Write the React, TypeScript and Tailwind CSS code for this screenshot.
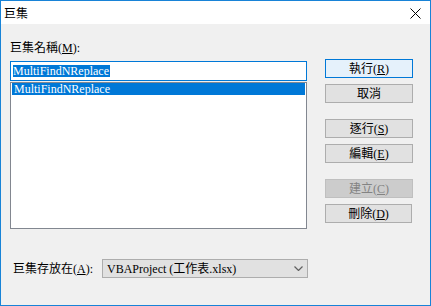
import React from "react";

const F = "font-['Liberation_Serif','Noto_Sans_CJK_TC',serif]";

function U({ c }: { c: string }) {
  return <span className="underline underline-offset-[1px] decoration-1">{c}</span>;
}

function Btn({
  children,
  kind = "normal",
  w = "w-[88px]",
  mt,
}: {
  children: React.ReactNode;
  kind?: "default" | "normal" | "disabled";
  w?: string;
  mt: string;
}) {
  const cls =
    kind === "default"
      ? "bg-[#e5f1fb] border-[#0078d7] text-black"
      : kind === "disabled"
      ? "bg-[#cccccc] border-[#bfbfbf] text-[#838383]"
      : "bg-[#e1e1e1] border-[#adadad] text-black";
  return (
    <div
      className={`${w} ${mt} h-[19px] border flex items-center justify-center text-[12px] leading-[14px] ${cls}`}
    >
      {children}
    </div>
  );
}

export default function App() {
  return (
    <div
      className={`w-[431px] h-[306px] border border-[#1883d7] bg-[#f0f0f0] flex flex-col ${F} text-black`}
    >
      {/* title bar */}
      <div className="h-[23px] bg-white flex items-center justify-between pl-[3px] pr-[9px]">
        <span className="text-[12px] leading-[14px] font-['Noto_Sans_CJK_TC',sans-serif]">巨集</span>
        <svg width="11" height="11" viewBox="0 0 11 11" className="mt-[2px]">
          <path d="M0.5 0.5 L10.5 10.5 M10.5 0.5 L0.5 10.5" stroke="#000" strokeWidth="1" fill="none" />
        </svg>
      </div>

      {/* top section */}
      <div className="flex pl-[9px]">
        <div className="w-[297px] flex flex-col">
          <div className="mt-[17px] h-[14px] text-[12px] leading-[14px]">
            巨集名稱(<U c="M" />):
          </div>
          <div className="mt-[6px] h-[20px] border border-[#0078d7] bg-white flex items-center pl-[2px]">
            <span className="bg-[#0078d7] text-white text-[12px] leading-[12px] h-[12px] pr-[1px]">
              MultiFindNReplace
            </span>
          </div>
          <div className="mt-[1px] h-[147px] border border-[#828790] bg-white pt-0 px-px">
            <div className="h-[12px] bg-[#0078d7] text-white text-[12px] leading-[12px] pl-[2px]">
              MultiFindNReplace
            </div>
          </div>
        </div>
        <div className="ml-[18px] flex flex-col">
          <Btn kind="default" mt="mt-[35px]">
            執行(<U c="R" />)
          </Btn>
          <Btn mt="mt-[6px]">取消</Btn>
          <Btn mt="mt-[16px]">
            逐行(<U c="S" />)
          </Btn>
          <Btn mt="mt-[6px]">
            編輯(<U c="E" />)
          </Btn>
          <Btn kind="disabled" mt="mt-[16px]">
            建立(<U c="C" />)
          </Btn>
          <Btn mt="mt-[6px]" w="w-[87px]">
            刪除(<U c="D" />)
          </Btn>
        </div>
      </div>

      {/* bottom row */}
      <div className="mt-[30px] flex items-center pl-[12px]">
        <div className="w-[89px] text-[12px] leading-[14px]">
          巨集存放在(<U c="A" />):
        </div>
        <div className="w-[206px] h-[19px] border border-[#adadad] bg-[#e1e1e1] flex items-center justify-between pl-[4px] pr-[4px]">
          <span className="text-[12px] leading-[14px] whitespace-nowrap">VBAProject (工作表.xlsx)</span>
          <svg width="9" height="5" viewBox="0 0 9 5">
            <path d="M0.5 0.5 L4.5 4.5 L8.5 0.5" stroke="#606060" strokeWidth="1.2" fill="none" />
          </svg>
        </div>
      </div>
    </div>
  );
}
